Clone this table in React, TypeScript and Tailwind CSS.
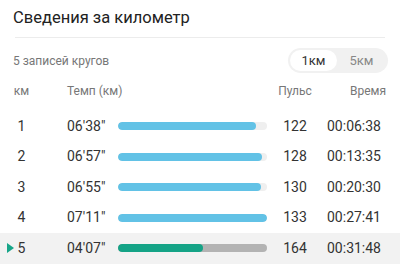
import React from "react";

const laps = [
  { km: 1, pace: "06'38\"", sec: 398, hr: 122, time: "00:06:38" },
  { km: 2, pace: "06'57\"", sec: 417, hr: 128, time: "00:13:35" },
  { km: 3, pace: "06'55\"", sec: 415, hr: 130, time: "00:20:30" },
  { km: 4, pace: "07'11\"", sec: 431, hr: 133, time: "00:27:41" },
  { km: 5, pace: "04'07\"", sec: 247, hr: 164, time: "00:31:48", current: true },
];

const maxSec = Math.max(...laps.map((l) => l.sec));

export default function App() {
  return (
    <div
      className="w-[400px] h-[279px] bg-white overflow-hidden text-[#333]"
      style={{ fontFamily: "Roboto, 'Noto Sans', sans-serif" }}
    >
      {/* Title */}
      <div className="h-[37px] flex items-center px-[13px] text-[16.5px] text-[#222]">
        Сведения за километр
      </div>
      <div className="mx-[15px] h-px bg-[#ececec]" />

      {/* Summary + toggle */}
      <div className="flex items-center justify-between pl-[13px] pr-[12px] pt-[10px]">
        <span className="text-[12px] text-[#777]">5 записей кругов</span>
        <div className="flex items-center h-[25px] w-[100px] rounded-full bg-[#f1f1f1] p-[2px] text-[13px]">
          <div className="h-full w-[47px] rounded-full bg-white flex items-center justify-center text-[#333]">
            1км
          </div>
          <div className="flex-1 flex items-center justify-center text-[#888]">5км</div>
        </div>
      </div>

      {/* Header */}
      <div className="flex items-center h-[18px] mt-[9px] pl-[8px] text-[12px] text-[#777]">
        <div className="w-[27px] text-center">км</div>
        <div className="ml-[32px] w-[200px]">Темп (км)</div>
        <div className="w-[56px] text-center">Пульс</div>
        <div className="ml-[4px] w-[59px] text-right">Время</div>
      </div>

      {/* Rows */}
      <div className="mt-[11px]">
        {laps.map((l) => (
          <div
            key={l.km}
            className={`relative flex items-center h-[30.5px] pl-[8px] text-[14px] ${
              l.current ? "bg-[#f2f2f2]" : ""
            }`}
          >
            {l.current && (
              <svg className="absolute left-[7px] top-[10px]" width="7" height="10" viewBox="0 0 7 10">
                <path d="M0 0 L7 5 L0 10 Z" fill="#17a589" />
              </svg>
            )}
            <div className="w-[27px] text-center">{l.km}</div>
            <div className="ml-[32px] w-[51px]">{l.pace}</div>
            <div
              className={`w-[149px] h-[8px] rounded-full overflow-hidden ${
                l.current ? "bg-[#b3b3b3]" : "bg-[#efefef]"
              }`}
            >
              <div
                className={`h-full rounded-full ${l.current ? "bg-[#14a386]" : "bg-[#62c2e6]"}`}
                style={{ width: `${(l.sec / maxSec) * 100}%` }}
              />
            </div>
            <div className="w-[56px] text-center">{l.hr}</div>
            <div className="ml-[4px] w-[59px]">{l.time}</div>
          </div>
        ))}
      </div>
    </div>
  );
}
